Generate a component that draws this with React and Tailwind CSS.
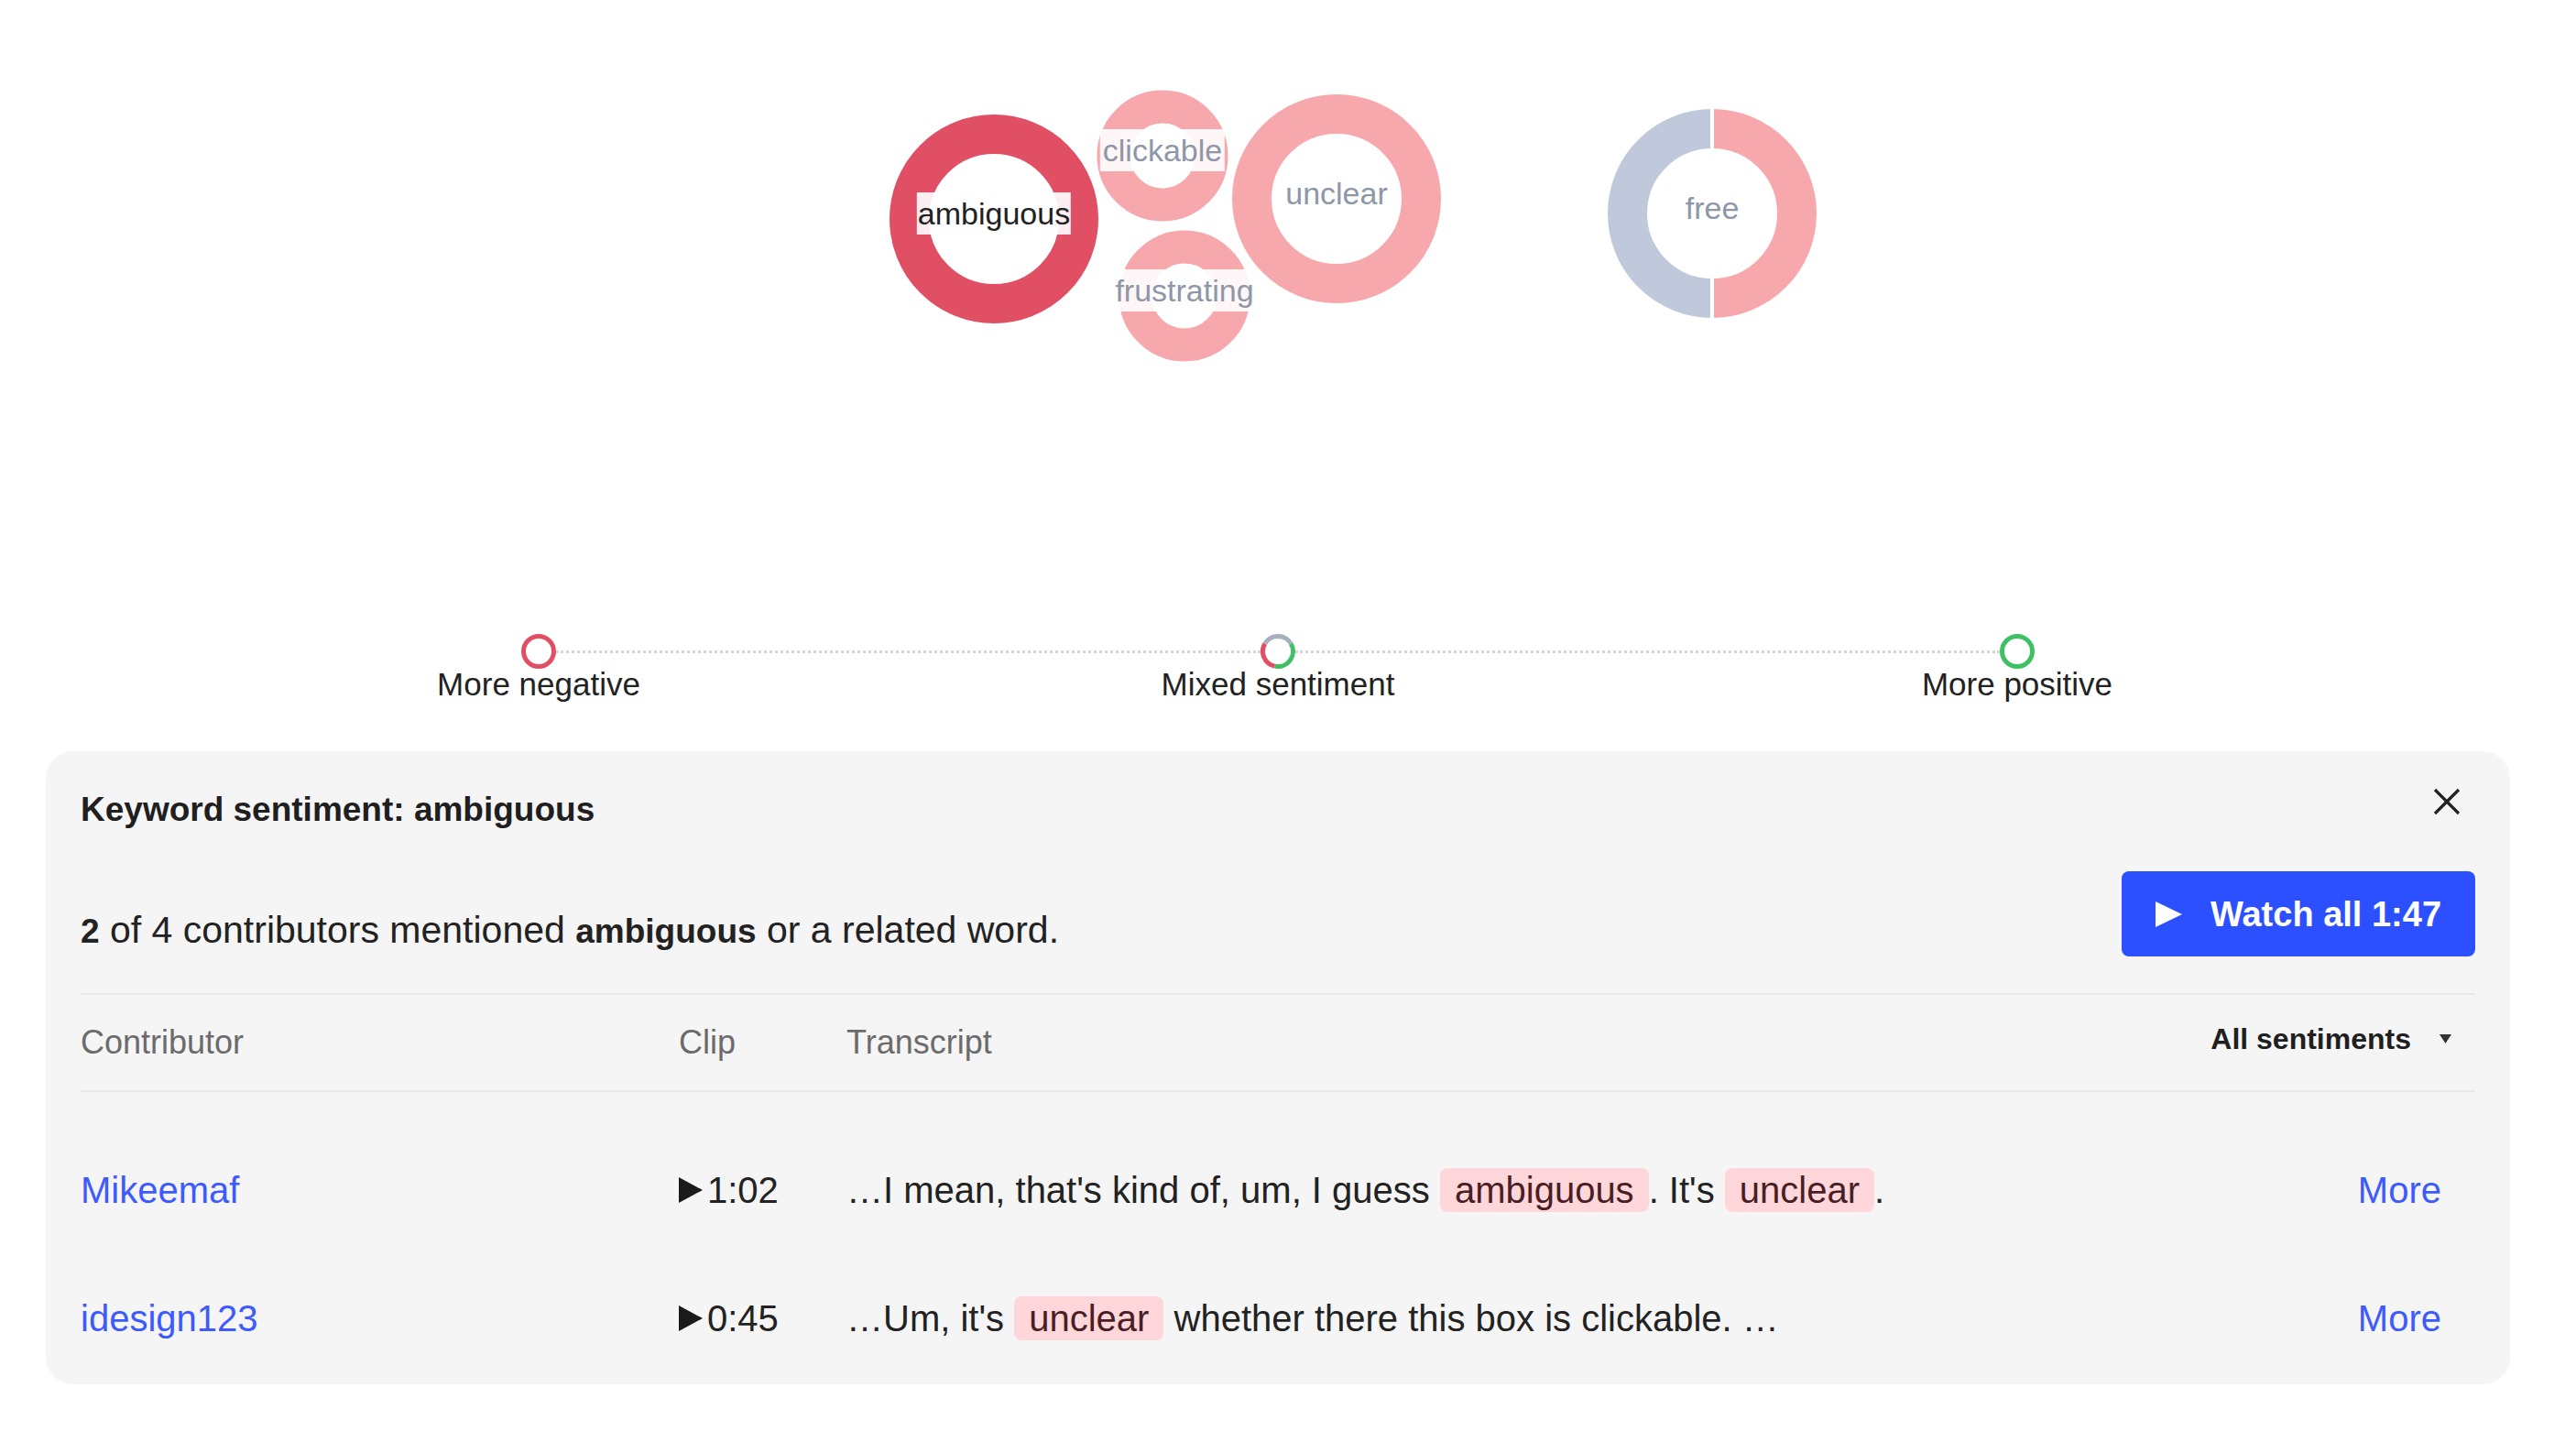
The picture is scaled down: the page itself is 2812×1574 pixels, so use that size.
import React from "react";

function arcPath(cx, cy, r, a0, a1) {
  const p = (a) => [cx + r * Math.sin((a * Math.PI) / 180), cy - r * Math.cos((a * Math.PI) / 180)];
  const [x0, y0] = p(a0);
  const [x1, y1] = p(a1);
  const large = a1 - a0 > 180 ? 1 : 0;
  return `M${x0} ${y0} A${r} ${r} 0 ${large} 1 ${x1} ${y1}`;
}

function BubbleChart() {
  return (
    <div className="relative h-[420px]">
      <svg width="2690" height="420" className="absolute left-0 top-0">
        {/* ambiguous */}
        <circle cx="1035" cy="239" r="92.5" fill="none" stroke="#e14f65" strokeWidth="43" />
        {/* clickable */}
        <circle cx="1219" cy="170" r="53.5" fill="none" stroke="#f7a8ad" strokeWidth="36" />
        {/* frustrating */}
        <circle cx="1243" cy="323" r="53.5" fill="none" stroke="#f7a8ad" strokeWidth="36" />
        {/* unclear */}
        <circle cx="1409" cy="217" r="92.5" fill="none" stroke="#f7a8ad" strokeWidth="43" />
        {/* free */}
        <path d={arcPath(1819, 233, 92.5, 0, 180)} fill="none" stroke="#f7a8ad" strokeWidth="43" />
        <path d={arcPath(1819, 233, 92.5, 180, 360)} fill="none" stroke="#c0c9dc" strokeWidth="43" />
        <rect x="1817" y="115" width="4" height="236" fill="#ffffff" />
      </svg>
      <span className="absolute left-[1035px] top-[233px] -translate-x-1/2 -translate-y-1/2 whitespace-nowrap bg-white/90 px-[1px] text-[34px] leading-[46px] text-[#222]">
        ambiguous
      </span>
      <span className="absolute left-[1219px] top-[164px] -translate-x-1/2 -translate-y-1/2 whitespace-nowrap bg-white/90 px-[3px] text-[34px] leading-[46px] text-[#8e97a8]">
        clickable
      </span>
      <span className="absolute left-[1243px] top-[317px] -translate-x-1/2 -translate-y-1/2 whitespace-nowrap bg-white/90 px-[3px] text-[34px] leading-[46px] text-[#8e97a8]">
        frustrating
      </span>
      <span className="absolute left-[1409px] top-[211px] -translate-x-1/2 -translate-y-1/2 whitespace-nowrap px-[3px] text-[34px] leading-[46px] text-[#8e97a8]">
        unclear
      </span>
      <span className="absolute left-[1819px] top-[227px] -translate-x-1/2 -translate-y-1/2 whitespace-nowrap px-[3px] text-[34px] leading-[46px] text-[#8e97a8]">
        free
      </span>
    </div>
  );
}

function AxisDot({ kind }) {
  if (kind === "mixed") {
    return (
      <svg width="38" height="38" className="shrink-0">
        <path d={arcPath(19, 19, 16.5, 300, 420)} fill="none" stroke="#a9b0bd" strokeWidth="5" />
        <path d={arcPath(19, 19, 16.5, 60, 192)} fill="none" stroke="#3fc064" strokeWidth="5" />
        <path d={arcPath(19, 19, 16.5, 192, 300)} fill="none" stroke="#e14f65" strokeWidth="5" />
      </svg>
    );
  }
  return (
    <svg width="38" height="38" className="shrink-0">
      <circle cx="19" cy="19" r="16.5" fill="none" stroke={kind === "neg" ? "#e14f65" : "#3fc064"} strokeWidth="5" />
    </svg>
  );
}

function Axis() {
  return (
    <div className="mt-[272px]">
      <div className="mx-[calc(20%-19px)] flex items-center">
        <AxisDot kind="neg" />
        <div className="h-0 flex-1 border-t-[3px] border-dotted border-[#d6d6d6]" />
        <AxisDot kind="mixed" />
        <div className="h-0 flex-1 border-t-[3px] border-dotted border-[#d6d6d6]" />
        <AxisDot kind="pos" />
      </div>
      <div className="mx-[20%] flex justify-between text-[35px] leading-[34px] text-[#222]">
        <div className="flex w-0 justify-center whitespace-nowrap">More negative</div>
        <div className="flex w-0 justify-center whitespace-nowrap">Mixed sentiment</div>
        <div className="flex w-0 justify-center whitespace-nowrap">More positive</div>
      </div>
    </div>
  );
}

function Chip({ children }) {
  return (
    <span className="rounded-[8px] bg-[#ffd7da] px-[16px] py-[2px] text-[#4a1e24]">{children}</span>
  );
}

function PlayTri() {
  return (
    <svg width="26" height="28" viewBox="0 0 26 28" className="shrink-0">
      <path d="M0 0 L26 14 L0 28 Z" fill="#1a1a1a" />
    </svg>
  );
}

function Row({ name, time, children }) {
  return (
    <div className="flex h-[140px] items-center text-[40px] text-[#222]">
      <div className="w-[653px] text-[#3d5afe]">{name}</div>
      <div className="flex w-[183px] items-center gap-[5px]">
        <PlayTri />
        <span>{time}</span>
      </div>
      <div className="flex-1 whitespace-nowrap">{children}</div>
      <div className="pr-[37px] text-[#3d5afe]">More</div>
    </div>
  );
}

function Panel() {
  return (
    <div className="mt-[56px] rounded-[30px] bg-[#f5f5f5] px-[38px] pb-[2px] pt-[42px]">
      <div className="flex items-start justify-between">
        <div className="text-[37px] font-bold leading-[44px] text-[#1f1f1f]">Keyword sentiment: ambiguous</div>
        <svg width="30" height="30" viewBox="0 0 30 30" className="mr-[16px] mt-[-2px]">
          <path d="M2 2 L28 28 M28 2 L2 28" stroke="#222" strokeWidth="3.2" />
        </svg>
      </div>
      <div className="mt-[45px] flex items-end justify-between">
        <div className="pb-[3px] text-[41px] leading-[48px] text-[#222]">
          <span className="text-[37px] font-bold">2</span> of 4 contributors mentioned{" "}
          <span className="text-[37px] font-bold">ambiguous</span> or a related word.
        </div>
        <button className="flex h-[93px] w-[386px] items-center rounded-[8px] bg-[#2c50ff] pl-[37px] text-white">
          <svg width="29" height="28" viewBox="0 0 29 28" className="shrink-0">
            <path d="M0 0 L29 14 L0 28 Z" fill="#ffffff" />
          </svg>
          <span className="ml-[31px] text-[38px] font-bold leading-none">Watch all 1:47</span>
        </button>
      </div>
      <div className="mt-[40px] border-t-2 border-[#e8e8e8]" />
      <div className="flex h-[104px] items-center text-[36px] text-[#6b6b6b]">
        <div className="w-[653px]">Contributor</div>
        <div className="w-[183px]">Clip</div>
        <div className="flex-1">Transcript</div>
        <div className="mb-[8px] flex items-center pr-[26px] text-[32px] font-bold text-[#1f1f1f]">
          <span>All sentiments</span>
          <svg width="13" height="10" viewBox="0 0 13 10" className="ml-[31px]">
            <path d="M0 0 L13 0 L6.5 10 Z" fill="#333" />
          </svg>
        </div>
      </div>
      <div className="border-t-2 border-[#e8e8e8]" />
      <div className="pt-[37px]">
        <Row name="Mikeemaf" time="1:02">
          …I mean, that's kind of, um, I guess <Chip>ambiguous</Chip>. It's <Chip>unclear</Chip>.
        </Row>
        <Row name="idesign123" time="0:45">
          …Um, it's <Chip>unclear</Chip> whether there this box is clickable. …
        </Row>
      </div>
    </div>
  );
}

export default function App() {
  return (
    <div className="min-h-screen bg-white pl-[50px] pr-[72px] font-['Liberation_Sans',Arial,sans-serif]">
      <BubbleChart />
      <Axis />
      <Panel />
    </div>
  );
}
